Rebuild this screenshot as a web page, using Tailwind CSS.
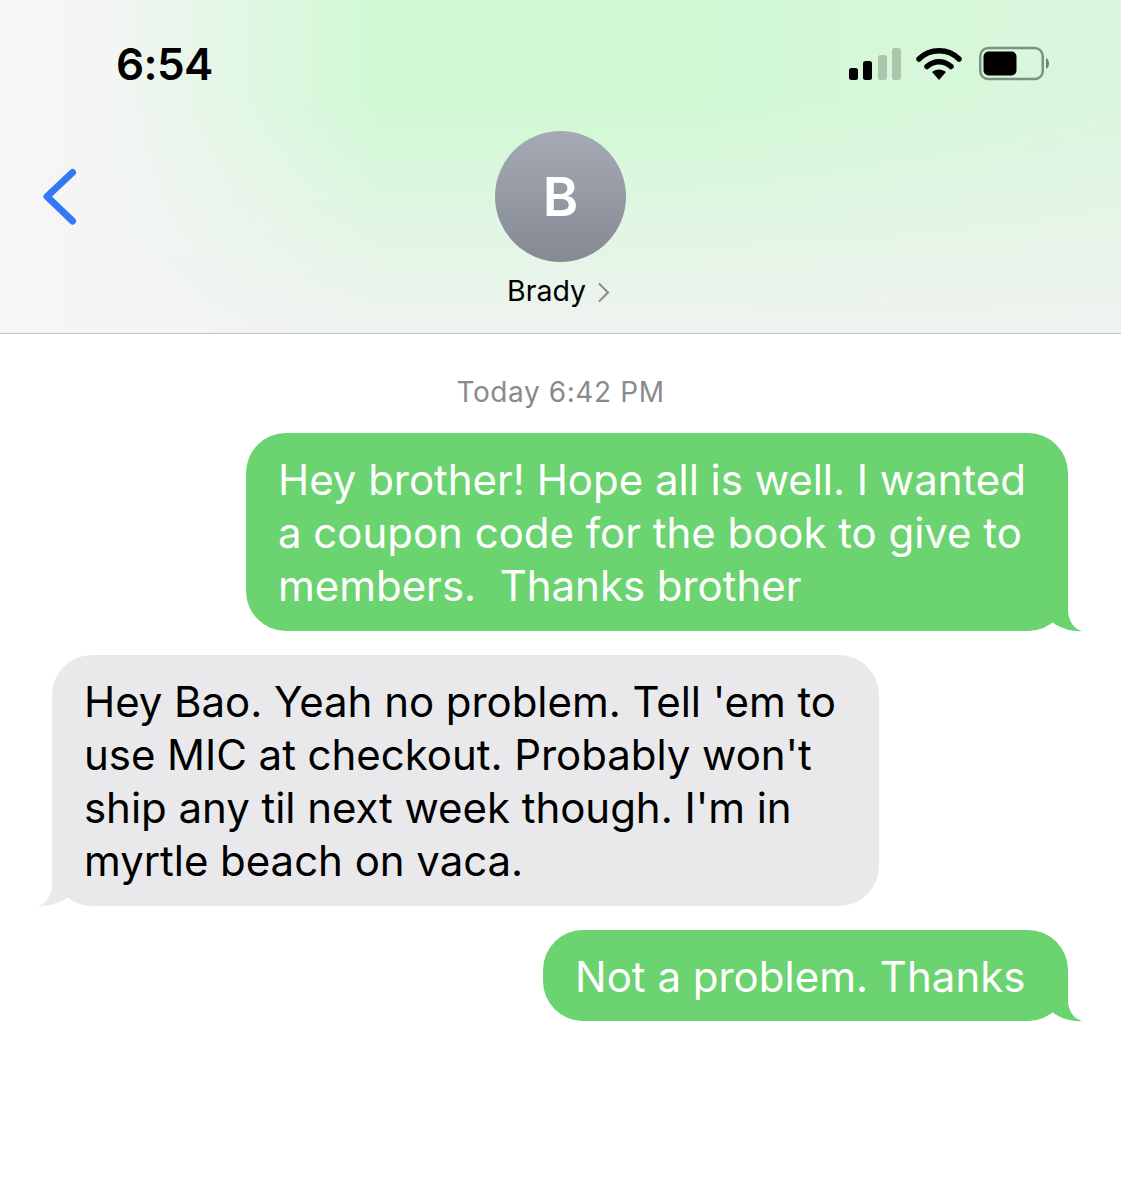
<!DOCTYPE html>
<html lang="en">
    <head>
        <meta charset="UTF-8">
        <meta name="viewport" content="width=device-width, initial-scale=1.0">
        <script src="https://cdn.jsdelivr.net/npm/@tailwindcss/browser@4"></script>
        <title>Messages</title>
    </head>
    <body class="bg-white font-['Inter',sans-serif]">
        <div class="w-[1121px] h-[1200px] overflow-hidden">
            <header class="relative h-[334px] border-b border-[#c4c6c5] bg-[linear-gradient(90deg,#f6f6f7_0%,#f5f5f6_8%,rgba(245,245,246,0)_34%),linear-gradient(180deg,rgba(240,243,241,0)_30%,#eff3f0_100%),linear-gradient(90deg,#d0f9d4_0%,#d0f9d4_62%,#dbf6de_100%)]">
                <div class="flex items-center justify-between pl-[116px] pr-[72px] pt-[36px] h-[94px]">
                    <span class="text-[44px] leading-[56px] font-semibold text-black tracking-[-0.6px] -mt-[2px]">6:54</span>
                    <div class="flex items-center -mt-[3px] -mr-[2px]">
                        <svg width="54" height="34" viewBox="0 0 54 34" fill="black">
                            <rect x="2" y="21" width="9" height="12" rx="2.5"/>
                            <rect x="16" y="14" width="9" height="19" rx="2.5"/>
                            <rect x="31" y="8" width="9" height="25" rx="2.5" opacity="0.2"/>
                            <rect x="45" y="1" width="9" height="32" rx="2.5" opacity="0.2"/>
                        </svg>
                        <svg class="ml-[15px]" width="46" height="34" viewBox="0 0 46 34">
                            <path d="M3 12 C14 1 32 1 43 12" fill="none" stroke="black" stroke-width="5.5" stroke-linecap="round"/>
                            <path d="M11 19.5 C18 13 28 13 35 19.5" fill="none" stroke="black" stroke-width="5.5" stroke-linecap="round"/>
                            <path d="M16 25 C20 21.5 26 21.5 30 25 L23 33 Z" fill="black"/>
                        </svg>
                        <svg class="ml-[17px]" width="72" height="36" viewBox="0 0 72 36">
                            <rect x="1.25" y="2" width="62.5" height="31" rx="8" fill="none" stroke="#7a9480" stroke-width="2.5"/>
                            <rect x="4.5" y="5.5" width="33" height="24" rx="5" fill="black"/>
                            <path d="M67 12 C71 14 71 21 67 23 Z" fill="#6d7f71"/>
                        </svg>
                    </div>
                </div>
                <svg class="absolute left-[42px] top-[168px]" width="36" height="58" viewBox="0 0 36 58" fill="none">
                    <path d="M30.5 4.5 L5 28.5 L30.5 53" stroke="#3478f6" stroke-width="7" stroke-linecap="round" stroke-linejoin="round"/>
                </svg>
                <div class="flex flex-col items-center pt-[37px]">
                    <div class="w-[131px] h-[131px] rounded-full flex items-center justify-center bg-linear-to-b from-[#a6aab5] to-[#858993] text-white text-[54px] font-semibold">B</div>
                    <div class="flex items-center gap-[11px] mt-[11px] h-[36px] text-[28.5px] text-black font-normal -ml-[4px]">
                        <span>Brady</span>
                        <svg width="13" height="21" viewBox="0 0 13 21" fill="none" class="mt-[2px]">
                            <path d="M2 1.5 L11 10.5 L2 19.5" stroke="#8a8a8e" stroke-width="2"/>
                        </svg>
                    </div>
                </div>
            </header>

            <main class="flex flex-col">
                <div class="text-center text-[28px] leading-[34px] text-[#8a8a8e] tracking-[0.6px] mt-[41px]">Today 6:42 PM</div>

                <div class="relative self-end mr-[53px] mt-[24px] w-[822px] h-[198px] rounded-[40px] bg-[#6bd36f] text-white text-[42px] leading-[53px] tracking-[-0.03px] px-[32px] pt-[20px] whitespace-pre">Hey brother! Hope all is well. I wanted
a coupon code for the book to give to
members.  Thanks brother<svg class="absolute right-[-15px] bottom-[-1px]" width="40" height="42" viewBox="0 0 40 42" fill="#6bd36f"><path d="M25 0 L25 20 C25 30 31 40 40 41 C28 42 17 38 9 32 L0 20 Z"/></svg></div>

                <div class="relative self-start ml-[52px] mt-[24px] w-[827px] h-[251px] rounded-[40px] bg-[#e9e9eb] text-black text-[42px] leading-[53px] tracking-[-0.05px] px-[32px] pt-[20px] whitespace-pre">Hey Bao. Yeah no problem. Tell 'em to
use MIC at checkout. Probably won't
ship any til next week though. I'm in
myrtle beach on vaca.<svg class="absolute left-[-15px] bottom-[-1px] -scale-x-100" width="40" height="42" viewBox="0 0 40 42" fill="#e9e9eb"><path d="M25 0 L25 20 C25 30 31 40 40 41 C28 42 17 38 9 32 L0 20 Z"/></svg></div>

                <div class="relative self-end mr-[53px] mt-[24px] w-[525px] h-[91px] rounded-[40px] bg-[#6bd36f] text-white text-[42px] leading-[53px] px-[32px] pt-[20px] whitespace-pre">Not a problem. Thanks<svg class="absolute right-[-15px] bottom-[-1px]" width="40" height="42" viewBox="0 0 40 42" fill="#6bd36f"><path d="M25 0 L25 20 C25 30 31 40 40 41 C28 42 17 38 9 32 L0 20 Z"/></svg></div>
            </main>
        </div>
    </body>
</html>
